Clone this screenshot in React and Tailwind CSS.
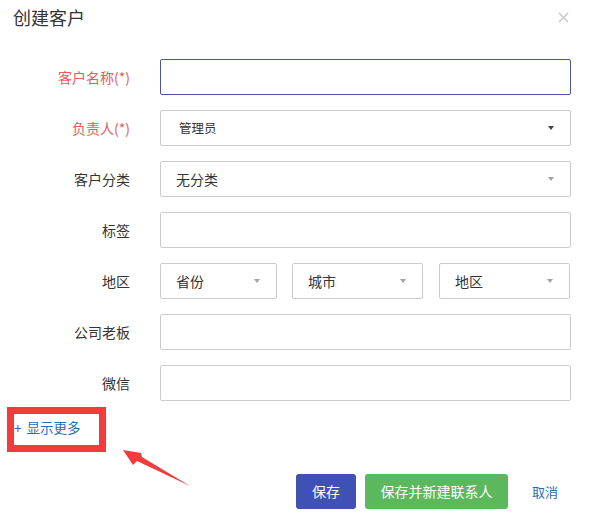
import React from 'react';

const Caret = ({ dark }) => (
  <span
    className={`absolute right-[16px] top-1/2 -translate-y-1/2 w-0 h-0 border-l-[3.5px] border-r-[3.5px] border-t-[4px] border-l-transparent border-r-transparent ${dark ? 'border-t-[#444]' : 'border-t-[#a3a3a3]'}`}
  />
);

const Field = ({ label, required, children }) => (
  <div className="flex items-center h-9">
    <label className={`w-[130px] text-right text-[14px] ${required ? 'text-[#e25c5c]' : 'text-[#333]'}`}>
      {label}
    </label>
    <div className="ml-[30px] w-[411px] h-9">{children}</div>
  </div>
);

const Box = ({ value, caret, dark, focus, small }) => (
  <div
    className={`relative h-9 w-full rounded-[2px] border bg-white flex items-center text-[#333] ${small ? 'pl-[18px] text-[12.5px]' : 'pl-[15px] text-[14px]'} ${focus ? 'border-[#4a57a0]' : 'border-[#cccccc]'}`}
  >
    {value}
    {caret && <Caret dark={dark} />}
  </div>
);

const App = () => {
  return (
    <div
      className="relative w-[590px] h-[526px] bg-white overflow-hidden"
      style={{ fontFamily: '"Noto Sans CJK SC", "Noto Sans", sans-serif' }}
    >
      <div className="flex items-center justify-between h-[34px] pl-[13px] pr-[21px]">
        <h2 className="text-[18px] text-[#333] leading-none">创建客户</h2>
        <svg width="11" height="11" viewBox="0 0 11 11" className="text-[#c4c4c4]">
          <path d="M1 1L10 10M10 1L1 10" stroke="currentColor" strokeWidth="1.3" />
        </svg>
      </div>

      <div className="mt-[25px] flex flex-col gap-[15px]">
        <Field label="客户名称(*)" required>
          <Box focus />
        </Field>
        <Field label="负责人(*)" required>
          <Box value="管理员" caret dark small />
        </Field>
        <Field label="客户分类">
          <Box value="无分类" caret />
        </Field>
        <Field label="标签">
          <Box />
        </Field>
        <Field label="地区">
          <div className="grid grid-cols-[117px_131px_132px] gap-x-[15px] h-9">
            <Box value="省份" caret />
            <Box value="城市" caret />
            <div className="ml-px"><Box value="地区" caret /></div>
          </div>
        </Field>
        <Field label="公司老板">
          <Box />
        </Field>
        <Field label="微信">
          <Box />
        </Field>
      </div>

      <div className="mt-[6px] ml-[7px] w-[99px] h-[45px] border-[7px] border-[#f23b3b] flex items-center pb-[4px] text-[13.5px] text-[#2b6cb0]">
        <span className="mr-[5px]">+</span>显示更多
      </div>

      <div className="mt-[22px] flex items-center pl-[296px]">
        <button className="w-[60px] h-[35px] rounded-[3px] bg-[#3f51b5] text-white text-[14px]">保存</button>
        <button className="ml-[9px] w-[143px] h-[35px] rounded-[3px] bg-[#5cb85c] text-white text-[14px]">保存并新建联系人</button>
        <button className="ml-[24px] text-[13px] text-[#2b6cb0]">取消</button>
      </div>

      <svg className="absolute left-0 top-0 pointer-events-none" width="590" height="526">
        <polygon
          points="123,450 141,453 142,457 190,486 137,461 133,465"
          fill="#f23b3b"
        />
      </svg>
    </div>
  );
};

export default App;
